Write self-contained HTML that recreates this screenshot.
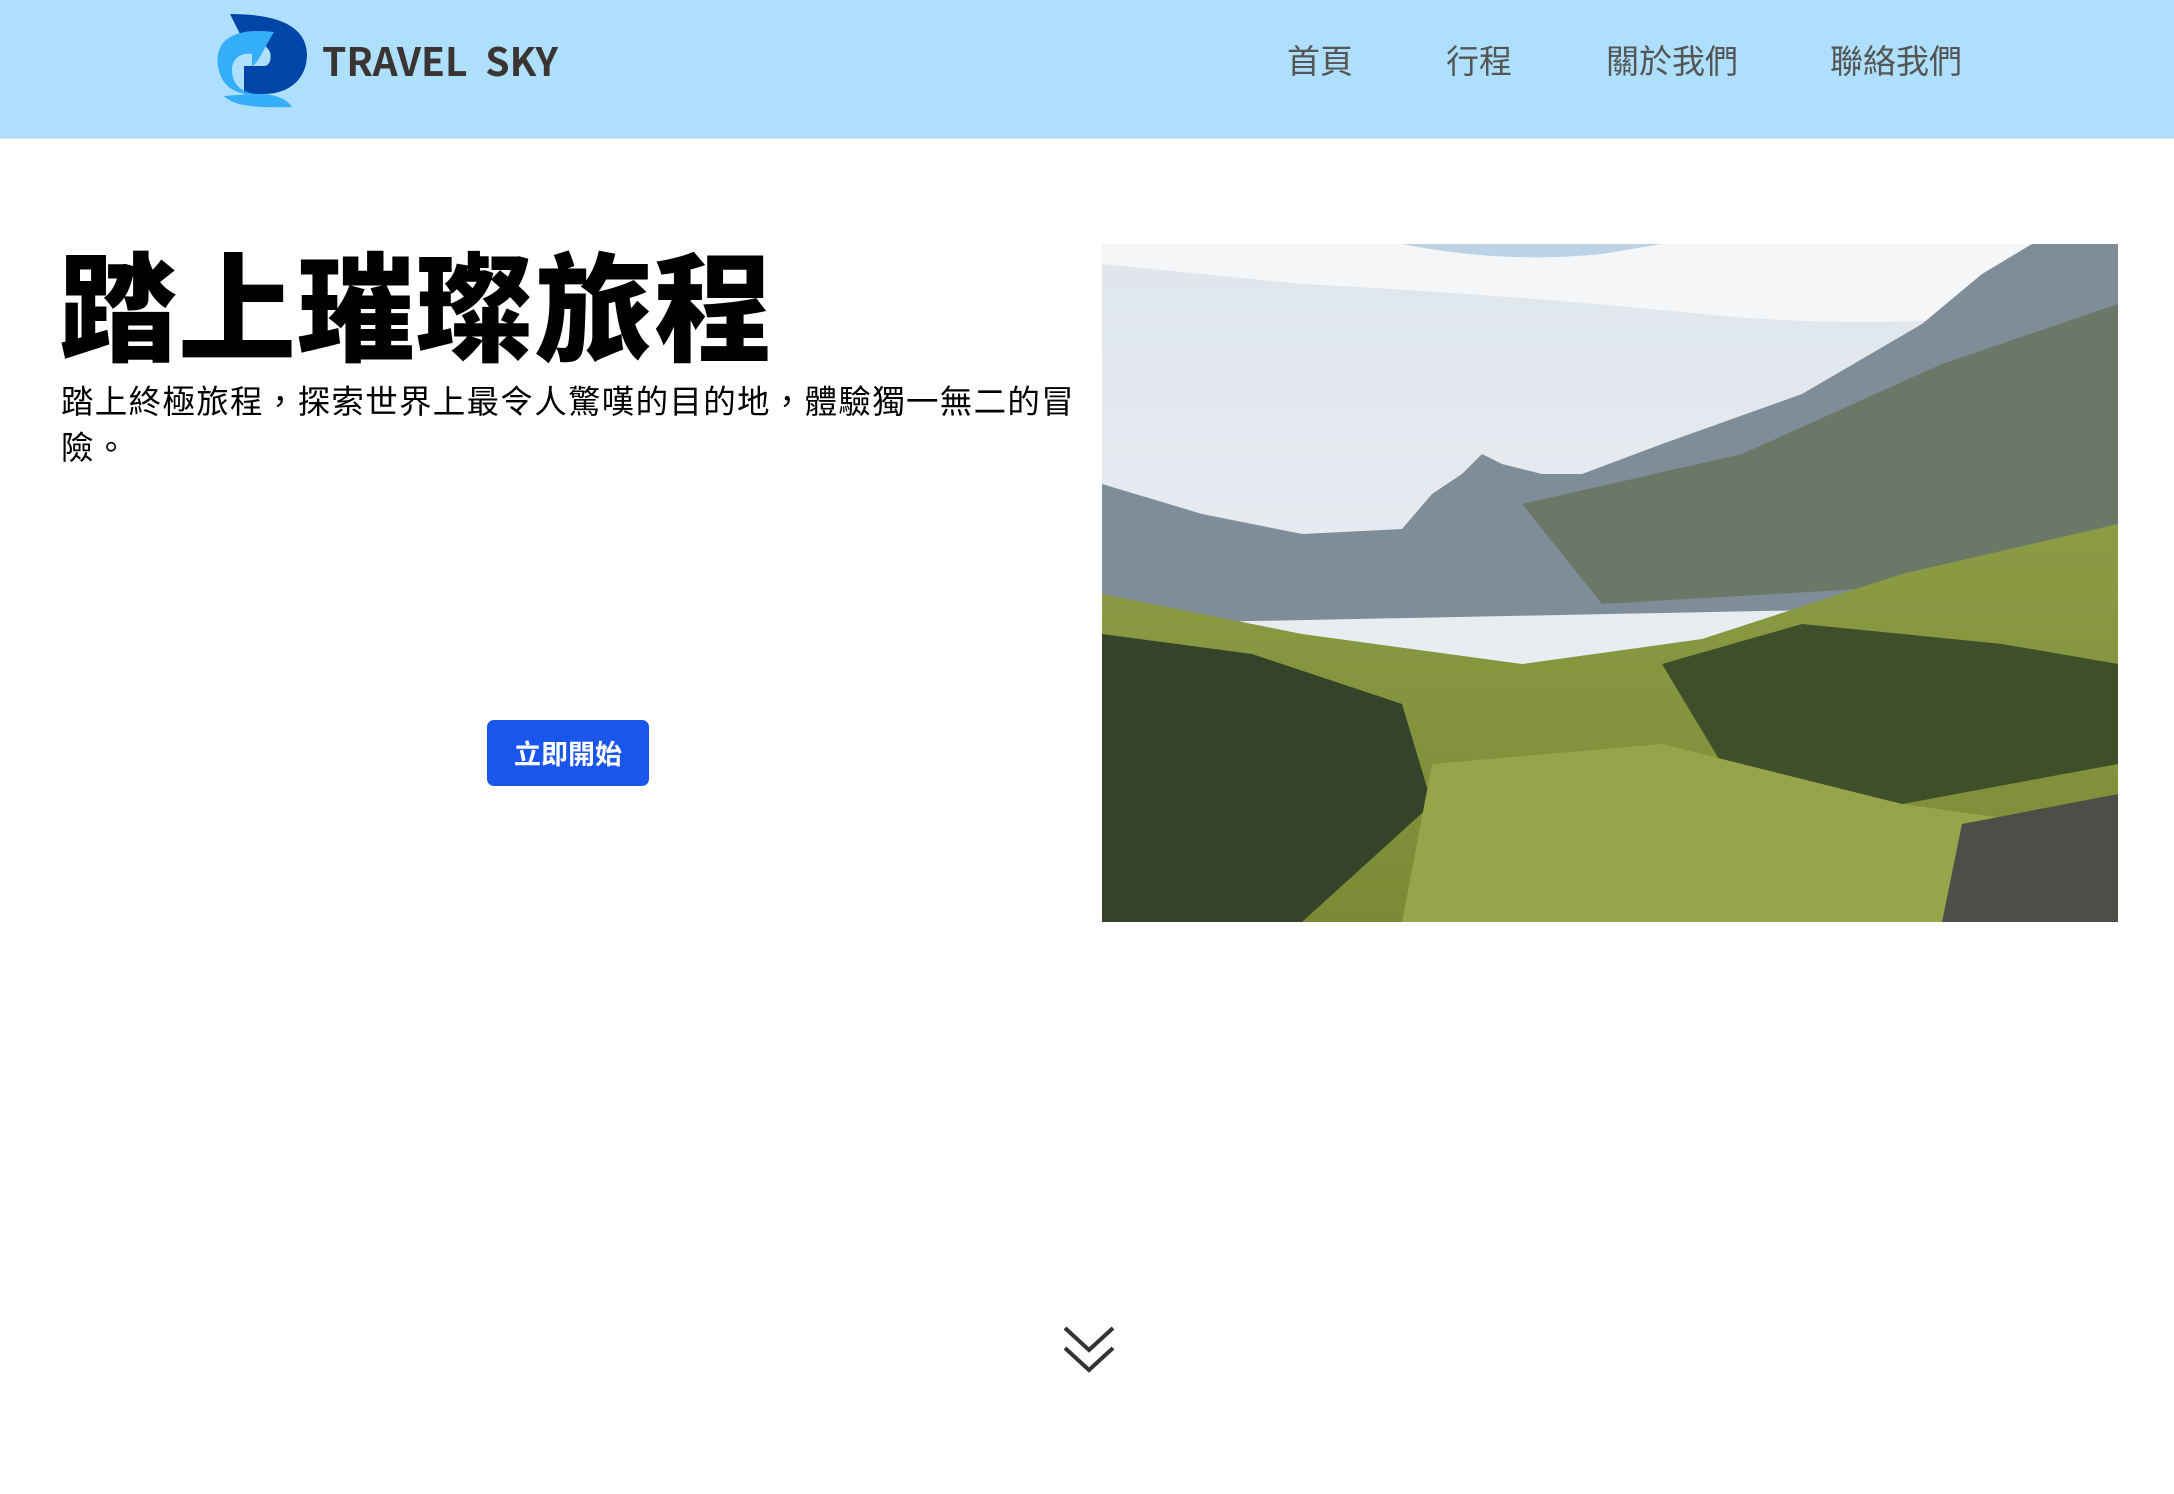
<!DOCTYPE html>
<html><head><meta charset="utf-8"><style>
*{margin:0;padding:0;box-sizing:border-box}
body{width:2174px;height:1494px;background:#fff;font-family:"Liberation Sans","Noto Sans CJK TC",sans-serif;position:relative;overflow:hidden}
header{position:absolute;left:0;top:0;width:2174px;height:139px;background:#aee0fd;border-bottom:1px solid #d8e8f0}
.brand{position:absolute;left:322px;top:32px;font-size:39px;font-weight:bold;color:#3a3532;letter-spacing:0;font-family:"Noto Sans CJK TC",sans-serif;white-space:pre}
nav a{position:absolute;top:35px;font-size:33px;color:#555;text-decoration:none;font-family:"Noto Sans CJK TC",sans-serif}
h1{position:absolute;left:59px;top:226px;font-size:118px;font-weight:900;color:#000;font-family:"Noto Sans CJK TC",sans-serif;letter-spacing:1px;line-height:150px}
p{position:absolute;left:61px;top:377px;width:1020px;font-size:32.5px;line-height:46px;color:#000;font-family:"Noto Sans CJK TC",sans-serif;letter-spacing:1.3px}
.btn{position:absolute;left:487px;top:720px;width:162px;height:66px;background:#1a56eb;border-radius:7px;color:#fff;font-size:27px;font-weight:bold;text-align:center;line-height:66px;font-family:"Noto Sans CJK TC",sans-serif}
.img{position:absolute;left:1102px;top:244px;width:1016px;height:678px;overflow:hidden}
</style></head><body>
<header>
<svg style="position:absolute;left:214px;top:14px" width="96" height="94" viewBox="0 0 96 94">
<path d="M16 0 C60 0 92 10 93 40 C93 66 74 80 50 80 L30 80 L30 52 L50 52 C55 52 58 46 56 38 C54 34 50 30 45 28 L45 40 C40 40 33 34 25 18 Z" fill="#0046a8"/>
<path d="M60 18 C44 16 24 16 12 26 C0 36 2 56 10 68 C16 76 26 80 36 80 L36 80 L10 82 C20 92 40 94 78 93 C72 84 60 80 45 80 C30 80 18 72 18 56 C18 44 28 38 38 40 L38 52 C44 50 50 34 60 18 Z" fill="#35aef9"/>
</svg>
<div class="brand">TRAVEL  SKY</div>
<nav><a style="left:1287px">首頁</a><a style="left:1446px">行程</a><a style="left:1606px">關於我們</a><a style="left:1830px">聯絡我們</a></nav>
</header>
<h1>踏上璀璨旅程</h1>
<p>踏上終極旅程，探索世界上最令人驚嘆的目的地，體驗獨一無二的冒險。</p>
<div class="btn">立即開始</div>
<div class="img">
<svg width="1016" height="678" viewBox="0 0 1016 678">
<defs>
<linearGradient id="sky" x1="0" y1="0" x2="0" y2="1"><stop offset="0" stop-color="#dfe6ec"/><stop offset="1" stop-color="#eef2f4"/></linearGradient>
<linearGradient id="gr" x1="0" y1="0" x2="0" y2="1"><stop offset="0" stop-color="#8c9c45"/><stop offset="1" stop-color="#7c8a35"/></linearGradient>
</defs>
<rect width="1016" height="678" fill="url(#sky)"/>
<path d="M0 0 L1016 0 L1016 60 Q800 90 600 70 Q400 50 200 40 Q100 30 0 20Z" fill="#f4f6f7"/>
<path d="M300 0 Q400 20 500 10 L560 0Z" fill="#bcd3e6"/>
<path d="M0 240 L100 270 L200 290 L300 285 L330 250 L360 230 L380 210 L400 220 L440 230 L480 230 L560 200 L700 150 L820 80 L880 30 L930 0 L1016 0 L1016 360 L0 380Z" fill="#7f8d99"/>
<path d="M420 260 L640 210 L840 120 L1016 60 L1016 330 L500 360Z" fill="#6b7868"/>
<path d="M0 350 L200 390 L420 420 L600 395 L800 330 L1016 280 L1016 678 L0 678Z" fill="url(#gr)"/>
<path d="M0 390 L150 410 L300 460 L330 560 L200 678 L0 678Z" fill="#34432a"/>
<path d="M560 420 L700 380 L900 400 L1016 420 L1016 520 L800 560 L620 520Z" fill="#3e4f2a"/>
<path d="M330 520 L560 500 L800 560 L1016 590 L1016 678 L300 678Z" fill="#98a44a"/>
<path d="M860 580 L1016 550 L1016 678 L840 678Z" fill="#4f4d47"/>
</svg>
</div>
<svg style="position:absolute;left:1060px;top:1322px" width="58" height="56" viewBox="0 0 58 56">
<path d="M5 6 L29 28 L53 6 M5 26 L29 48 L53 26" fill="none" stroke="#333" stroke-width="4"/>
</svg>
</body></html>
